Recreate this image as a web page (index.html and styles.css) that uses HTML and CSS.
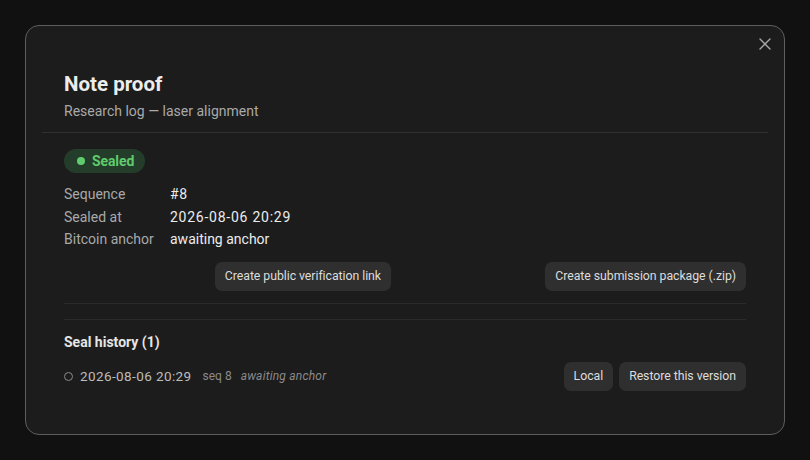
FILE: index.html
```html
<!DOCTYPE html>
<html lang="en">
<head>
<meta charset="utf-8">
<title>Note proof</title>
<link rel="stylesheet" href="styles.css">
</head>
<body>
<div class="modal">
  <button class="close" aria-label="Close">
    <svg width="12" height="12" viewBox="0 0 12 12"><path d="M1 1L11 11M11 1L1 11" stroke="#a8a8a8" stroke-width="1.4" stroke-linecap="round"/></svg>
  </button>
  <header class="head">
    <h1 class="title">Note proof</h1>
    <p class="subtitle">Research log — laser alignment</p>
  </header>
  <section class="body">
    <div class="status">
      <span class="badge"><span class="dot"></span>Sealed</span>
      <dl class="kv">
        <dt>Sequence</dt><dd class="num">#8</dd>
        <dt>Sealed at</dt><dd class="num">2026-08-06 20:29</dd>
        <dt>Bitcoin anchor</dt><dd>awaiting anchor</dd>
      </dl>
      <div class="actions">
        <button class="btn">Create public verification link</button>
        <button class="btn">Create submission package (.zip)</button>
      </div>
    </div>
    <div class="history">
      <h2 class="h-title">Seal history (1)</h2>
      <div class="h-row">
        <span class="ring"></span>
        <span class="h-date">2026-08-06 20:29</span>
        <span class="h-seq">seq 8</span>
        <span class="h-anchor">awaiting anchor</span>
        <span class="h-actions">
          <button class="btn">Local</button>
          <button class="btn">Restore this version</button>
        </span>
      </div>
    </div>
  </section>
</div>
</body>
</html>
```

FILE: styles.css
```css
* { box-sizing: border-box; }
html, body { margin: 0; padding: 0; }
body {
  background: #111111;
  font-family: Roboto, "Noto Sans", sans-serif;
  color: #e8e8e8;
  height: 460px;
  overflow: hidden;
}
.modal {
  position: relative;
  width: 760px;
  margin: 25px 0 0 25px;
  background: #1c1c1c;
  border: 1px solid #5e5e5e;
  border-radius: 14px;
  padding: 46px 0 43px;
}
.close {
  position: absolute;
  top: 10px;
  right: 11px;
  width: 16px;
  height: 16px;
  padding: 0;
  border: 0;
  background: none;
  display: flex;
  align-items: center;
  justify-content: center;
}
.head {
  margin: 0 16px;
  padding: 0 22px 11px;
  border-bottom: 1px solid #303030;
}
.title {
  margin: 0;
  font-size: 20.5px;
  line-height: 24px;
  font-weight: 700;
  color: #ececec;
}
.subtitle {
  margin: 5px 0 0;
  font-size: 14px;
  line-height: 20px;
  color: #a9a9a9;
}
.body {
  padding: 16px 38px 0;
}
.status {
  padding-bottom: 12px;
  border-bottom: 1px solid #2b2b2b;
}
.badge {
  display: inline-flex;
  align-items: center;
  gap: 7px;
  height: 24px;
  padding: 0 11px 0 13px;
  border-radius: 12px;
  background: #243d2a;
  color: #5fcb6d;
  font-size: 14px;
  font-weight: 700;
  letter-spacing: -0.1px;
}
.dot {
  width: 8px;
  height: 8px;
  border-radius: 50%;
  background: #5fcb6d;
}
.kv {
  display: grid;
  grid-template-columns: 106px 1fr;
  margin: 10px 0 0;
  font-size: 14px;
  line-height: 22.5px;
}
.kv dt { color: #a9a9a9; }
.kv dd { margin: 0; color: #ececec; }
.kv .num { letter-spacing: 0.75px; }
.actions {
  display: grid;
  grid-template-columns: 1fr 1fr;
  column-gap: 28px;
  justify-items: end;
  margin-top: 11px;
}
.btn {
  height: 29px;
  padding: 0 10px;
  border: 0;
  border-radius: 7px;
  background: #2f2f2f;
  color: #dddddd;
  font-family: inherit;
  font-size: 12.3px;
  letter-spacing: -0.05px;
}
.history {
  margin-top: 15px;
  border-top: 1px solid #2b2b2b;
  padding-top: 12px;
}
.h-title {
  margin: 0;
  font-size: 14px;
  line-height: 20px;
  font-weight: 700;
  color: #e6e6e6;
}
.h-row {
  display: flex;
  align-items: center;
  margin-top: 10px;
}
.ring {
  width: 9px;
  height: 9px;
  border: 1.5px solid #8a8a8a;
  border-radius: 50%;
  margin: 0 7px 0 0;
}
.h-date {
  font-size: 13.5px;
  letter-spacing: 0.4px;
  color: #bdbdbd;
  margin-right: 11px;
}
.h-seq {
  font-size: 12px;
  color: #8a8a8a;
  margin-right: 9px;
}
.h-anchor {
  font-size: 12px;
  font-style: italic;
  letter-spacing: 0.2px;
  color: #8a8a8a;
}
.h-actions {
  margin-left: auto;
  display: flex;
  gap: 6px;
}
```
